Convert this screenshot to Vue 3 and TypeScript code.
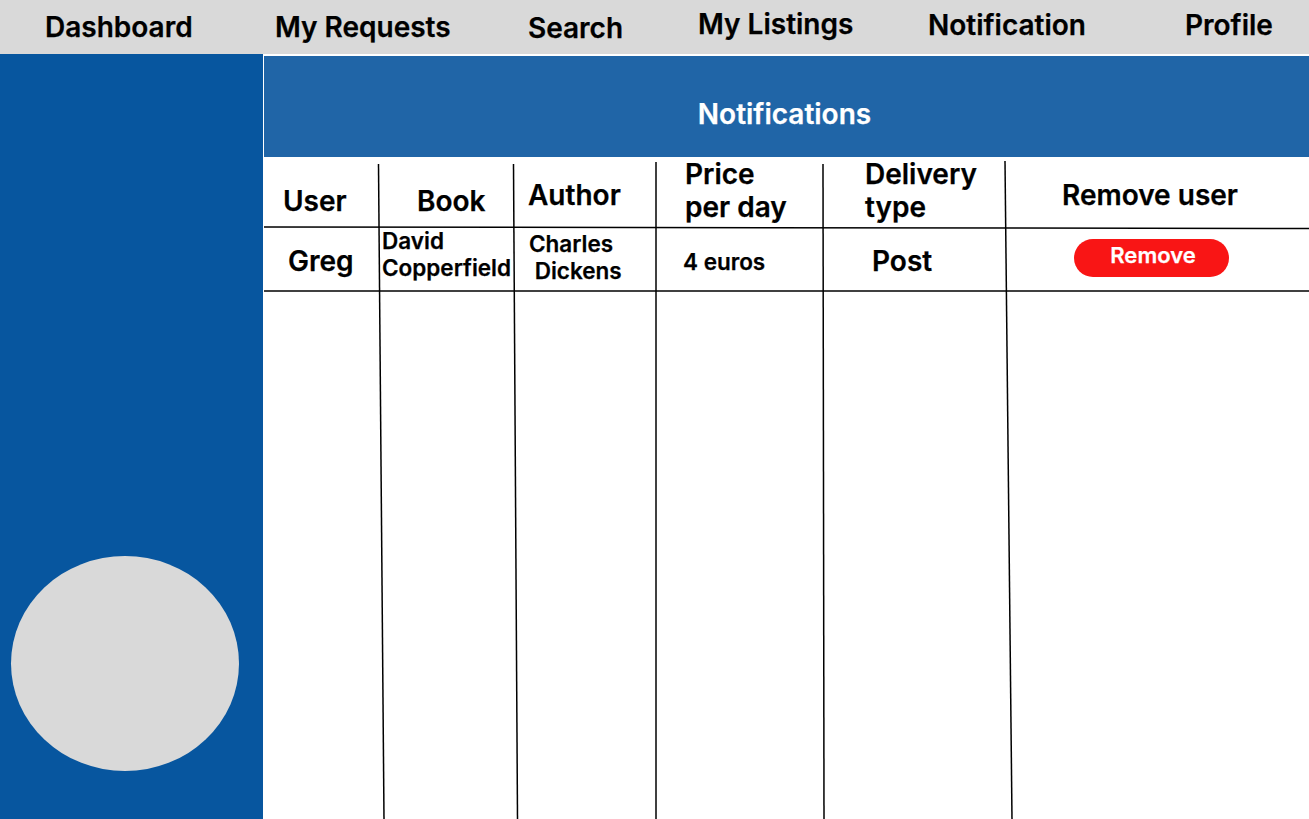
<script setup lang="ts">
const navItems = [
  { label: 'Dashboard', col: 230, top: 11 },
  { label: 'My Requests', col: 253, top: 11 },
  { label: 'Search', col: 170, top: 12 },
  { label: 'My Listings', col: 230, top: 8 },
  { label: 'Notification', col: 257, top: 9 },
  { label: 'Profile', col: 124, top: 9 },
]

// hand drawn column rules, x1 y1 x2 y2
const verticals = [
  [114.5, 7, 120, 662],
  [249.5, 7, 253.5, 662],
  [392, 5, 392, 662],
  [559, 7, 560, 662],
  [741, 4, 748, 662],
]
</script>

<template>
  <div class="page">
    <nav class="topbar">
      <div
        v-for="item in navItems"
        :key="item.label"
        class="nav-item"
        :style="{ width: item.col + 'px', paddingTop: item.top + 'px' }"
      >{{ item.label }}</div>
    </nav>

    <div class="body">
      <aside class="sidebar">
        <div class="avatar"></div>
      </aside>

      <main class="content">
        <header class="banner">Notifications</header>

        <div class="table">
          <svg class="rules" width="1045" height="662" viewBox="0 0 1045 662">
            <line
              v-for="(v, i) in verticals"
              :key="i"
              :x1="v[0]"
              :y1="v[1]"
              :x2="v[2]"
              :y2="v[3]"
            />
            <line x1="0" y1="70" x2="1045" y2="71.5" />
            <line x1="0" y1="134" x2="1045" y2="134" />
          </svg>

          <div class="row head">
            <div class="cell c-user">User</div>
            <div class="cell c-book">Book</div>
            <div class="cell c-author">Author</div>
            <div class="cell c-price">Price<br />per day</div>
            <div class="cell c-delivery">Delivery<br />type</div>
            <div class="cell c-remove">Remove user</div>
          </div>

          <div class="row data">
            <div class="cell d-user">Greg</div>
            <div class="cell d-book">David<br />Copperfield</div>
            <div class="cell d-author">Charles<br />&nbsp;Dickens</div>
            <div class="cell d-price">4 euros</div>
            <div class="cell d-delivery">Post</div>
            <div class="cell d-remove">
              <button class="remove-btn">Remove</button>
            </div>
          </div>
        </div>
      </main>
    </div>
  </div>
</template>

<style>
html,
body {
  margin: 0;
  background: #fff;
}
</style>

<style scoped>
.page {
  width: 1309px;
  height: 819px;
  overflow: hidden;
  display: flex;
  flex-direction: column;
  font-family: Inter, "Liberation Sans", sans-serif;
  font-weight: 600;
  color: #000;
  -webkit-text-stroke: 0.25px currentColor;
}

.topbar {
  height: 54px;
  flex: none;
  display: flex;
  padding-left: 45px;
  background: #d9d9d9;
  font-size: 28px;
  line-height: 32px;
}

.nav-item {
  flex: none;
  white-space: nowrap;
}

.body {
  flex: 1;
  display: flex;
  min-height: 0;
}

.sidebar {
  width: 263px;
  flex: none;
  display: flex;
  align-items: flex-end;
  padding: 0 0 48px 11px;
  box-sizing: border-box;
  background: #07569f;
}

.avatar {
  width: 228px;
  height: 215px;
  border-radius: 50%;
  background: #d9d9d9;
}

.content {
  flex: 1;
  margin-left: 1px;
  padding-top: 2px;
  min-width: 0;
}

.banner {
  height: 101px;
  padding: 42px 4px 0 0;
  box-sizing: border-box;
  background: #2065a7;
  color: #fff;
  font-size: 28px;
  line-height: 32px;
  text-align: center;
}

.table {
  position: relative;
  height: 662px;
}

.rules {
  position: absolute;
  left: 0;
  top: 0;
  pointer-events: none;
}

.rules line {
  stroke: #000;
  stroke-width: 1.5;
}

.row {
  display: grid;
  grid-template-columns: 115px 135px 142px 167px 182px 304px;
}

.head {
  height: 71px;
  font-size: 28px;
  line-height: 33px;
}

.data {
  height: 63px;
  font-size: 28px;
  line-height: 32px;
}

.c-user {
  padding: 28px 0 0 19px;
}

.c-book {
  padding: 28px 0 0 38px;
}

.c-author {
  padding: 22px 0 0 14px;
}

.c-price {
  padding: 1px 0 0 29px;
}

.c-delivery {
  padding: 1px 0 0 42px;
}

.c-remove {
  padding: 22px 0 0 57px;
}

.d-user {
  padding: 17px 0 0 24px;
}

.d-book {
  padding: 0 0 0 3px;
  font-size: 22.5px;
  line-height: 27px;
}

.d-book,
.d-author {
  margin-top: -1px;
}

.d-author {
  padding: 3px 0 0 15px;
  font-size: 22.5px;
  line-height: 27px;
}

.d-price {
  padding: 20px 0 0 27px;
  font-size: 22.5px;
  line-height: 27px;
}

.d-delivery {
  padding: 17px 0 0 49px;
}

.d-remove {
  padding: 11px 0 0 69px;
}

.remove-btn {
  display: block;
  width: 155px;
  height: 38px;
  padding: 0 0 6px 3px;
  border: none;
  border-radius: 19px;
  background: #f91515;
  color: #fff;
  font-family: inherit;
  font-weight: 600;
  font-size: 22px;
  line-height: 32px;
}
</style>
